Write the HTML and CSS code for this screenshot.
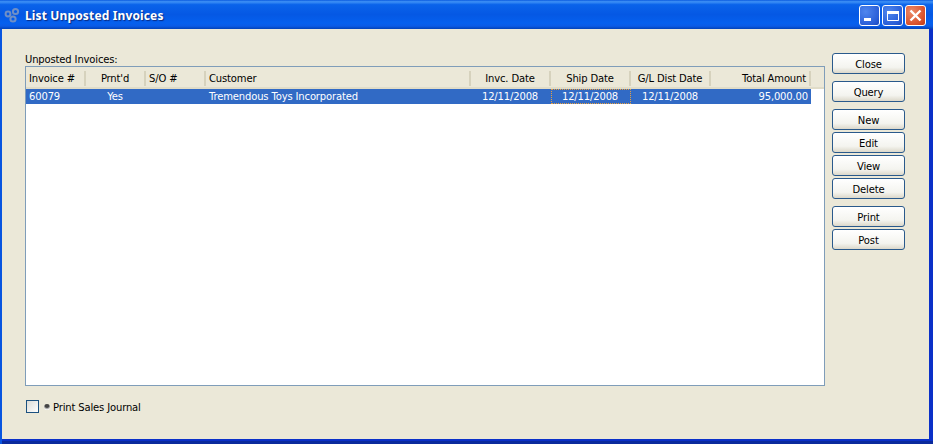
FILE: index.html
```html
<!DOCTYPE html>
<html lang="en">
<head>
<meta charset="utf-8">
<title>List Unposted Invoices</title>
<link rel="stylesheet" href="styles.css">
</head>
<body>
<div class="window">
  <header class="titlebar">
    <svg class="app-icon" width="16" height="18" viewBox="0 0 16 18">
      <g fill="none" stroke="#6f8fc6" stroke-width="2">
        <circle cx="4" cy="8" r="2.4"/>
        <circle cx="11.5" cy="5.500" r="2.6"/>
        <circle cx="9" cy="13" r="2.6"/>
      </g>
    </svg>
    <h1 class="title">List Unposted Invoices</h1>
    <div class="win-controls">
      <button class="wbtn" aria-label="Minimize"><svg width="19" height="19" viewBox="0 0 19 19"><rect x="4" y="12" width="7" height="3" fill="#fff"/></svg></button>
      <button class="wbtn" aria-label="Maximize"><svg width="19" height="19" viewBox="0 0 19 19"><path d="M4.500 5.500h11v9h-11z" fill="none" stroke="#fff"/><rect x="4" y="5" width="12" height="3" fill="#fff"/></svg></button>
      <button class="wbtn wbtn-close" aria-label="Close"><svg width="19" height="19" viewBox="0 0 19 19"><path d="M4.500 4.500l10 10M14.500 4.500l-10 10" stroke="#fff" stroke-width="2.4"/></svg></button>
    </div>
  </header>
  <main class="client">
    <section class="main-col">
      <div class="list-label">Unposted Invoices:</div>
      <div class="list">
        <div class="row head">
          <div class="cell">Invoice #</div>
          <div class="cell center">Prnt'd</div>
          <div class="cell">S/O #</div>
          <div class="cell">Customer</div>
          <div class="cell center">Invc. Date</div>
          <div class="cell center">Ship Date</div>
          <div class="cell center">G/L Dist Date</div>
          <div class="cell right">Total Amount</div>
        </div>
        <div class="row selected">
          <div class="cell">60079</div>
          <div class="cell center">Yes</div>
          <div class="cell"></div>
          <div class="cell">Tremendous Toys Incorporated</div>
          <div class="cell center">12/11/2008</div>
          <div class="cell center focus">12/11/2008</div>
          <div class="cell center">12/11/2008</div>
          <div class="cell right">95,000.00</div>
        </div>
      </div>
      <label class="check-row">
        <span class="checkbox"></span>
        <span class="pip"></span>
        <span class="check-text">Print Sales Journal</span>
      </label>
    </section>
    <aside class="buttons">
      <div class="group gap-lg">
        <button class="btn">Close</button>
        <button class="btn">Query</button>
      </div>
      <div class="group">
        <button class="btn">New</button>
        <button class="btn">Edit</button>
        <button class="btn">View</button>
        <button class="btn">Delete</button>
      </div>
      <div class="group">
        <button class="btn">Print</button>
        <button class="btn">Post</button>
      </div>
    </aside>
  </main>
</div>
</body>
</html>
```
FILE: styles.css
```css
* { box-sizing: border-box; }
html, body { margin: 0; padding: 0; }
body {
  width: 933px;
  height: 444px;
  overflow: hidden;
  font-family: "DejaVu Sans", sans-serif;
  font-size: 10px;
  letter-spacing: -0.15px;
  color: #000;
}
.window {
  width: 933px;
  height: 444px;
  display: flex;
  flex-direction: column;
  background:
    linear-gradient(90deg, #0855e0 0 2px, transparent 2px),
    linear-gradient(180deg, #0a30c8 0 441px, #0a2a9c 441px);
}
.titlebar {
  height: 29px;
  flex: none;
  display: flex;
  align-items: center;
  padding: 0 7px 0 4px;
  background: linear-gradient(180deg, #0a5adf 0%, #3f92f6 6%, #0a63ea 16%, #0558e4 50%, #0560ee 80%, #0a5be6 90%, #0242b8 100%);
}
.app-icon { flex: none; margin-top: 1px; }
.title {
  margin: 1px 0 0 5px;
  flex: 1;
  font: bold 12px "Noto Sans", sans-serif;
  letter-spacing: 0.14px;
  color: #fff;
  text-shadow: 1px 1px 1px #0a2a80;
}
.win-controls { display: flex; gap: 2px; margin-top: 1px; }
.wbtn {
  width: 21px;
  height: 21px;
  padding: 0;
  display: flex;
  align-items: center;
  justify-content: center;
  border: 1px solid #fff;
  border-radius: 3px;
  background: radial-gradient(circle at 30% 30%, #4f86ee, #2a5fd8 70%, #1b48bd);
}
.wbtn-close { background: radial-gradient(circle at 30% 30%, #ec8a68, #d8502a 70%, #bd3a18); }
.client {
  flex: none;
  width: 927px;
  height: 410px;
  margin-left: 2px;
  display: flex;
  background: #ebe8d8;
  padding: 24px 0 0 23px;
}
.main-col { width: 800px; flex: none; display: flex; flex-direction: column; }
.list-label { height: 13px; line-height: 13px; }
.list {
  width: 800px;
  height: 320px;
  background: #fff;
  border: 1px solid #7f9db9;
}
.row {
  display: grid;
  grid-template-columns: 60px 60px 60px 265px 80px 80px 80px 100px;
  width: 785px;
}
.head {
  width: 798px;
  height: 22px;
  align-items: center;
  background: #ebe8d8;
  border-bottom: 2px solid #e0dcc8;
  padding-top: 3px;
}
.head .cell {
  height: 15px;
  line-height: 15px;
  border-right: 2px solid #d6d2bd;
  padding: 0 3px;
}
.selected {
  height: 15px;
  background: #316ac5;
  color: #fff;
  line-height: 15px;
}
.selected .cell { padding: 0 3px; }
.selected .center { padding: 0 5px 0 3px; }
.center { text-align: center; }
.right { text-align: right; }
.cell { white-space: nowrap; overflow: hidden; }
.focus { outline: 1px dotted #e8a040; outline-offset: -1px; }
.check-row {
  display: flex;
  align-items: center;
  margin-top: 14px;
  height: 13px;
  margin-left: 1px;
}
.check-text { padding-top: 1px; margin-left: -1px; }
.checkbox {
  width: 13px;
  height: 13px;
  border: 1px solid #1c5180;
  background: linear-gradient(135deg, #dcdcd7, #fff);
}
.pip {
  width: 6px;
  height: 6px;
  margin: 0 4px 0 5px;
  border-radius: 50%;
  background: radial-gradient(circle at 50% 25%, #444 0 35%, #aaa 55%, #fff 80%);
}
.buttons {
  margin-left: 7px;
  width: 73px;
  display: flex;
  flex-direction: column;
  gap: 7px;
}
.group { display: flex; flex-direction: column; gap: 2px; }
.gap-lg { gap: 7px; }
.btn {
  width: 73px;
  height: 21px;
  padding: 1px 0 0;
  font: 10px "DejaVu Sans", sans-serif;
  letter-spacing: -0.15px;
  color: #000;
  border: 1px solid #2a5a8c;
  border-radius: 3px;
  background: linear-gradient(180deg, #fff 0%, #f4f4ef 70%, #dcd8ca 100%);
}
```
